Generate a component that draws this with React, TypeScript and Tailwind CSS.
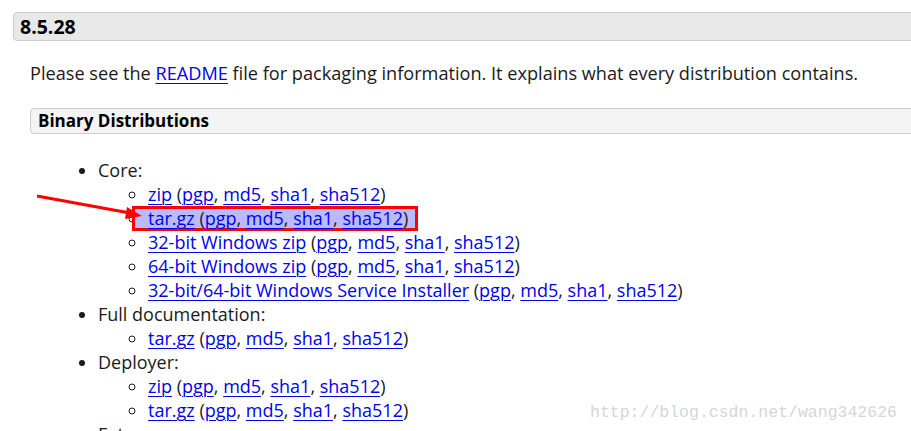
import React from 'react';

const sigs = ['pgp', 'md5', 'sha1', 'sha512'];

const Link: React.FC<{ children: React.ReactNode }> = ({ children }) => (
  <a href="#" className="text-[#0000ee] underline underline-offset-[3px] decoration-1">{children}</a>
);

const Dist: React.FC<{ name: string }> = ({ name }) => (
  <>
    <Link>{name}</Link> (
    {sigs.map((s, i) => (
      <React.Fragment key={s}>
        <Link>{s}</Link>
        {i < sigs.length - 1 ? ', ' : ''}
      </React.Fragment>
    ))}
    )
  </>
);

const Sub: React.FC<{ children: React.ReactNode }> = ({ children }) => (
  <li className="list-[circle] h-6 leading-6">{children}</li>
);

const App: React.FC = () => {
  return (
    <div
      className="relative w-[911px] h-[431px] overflow-hidden bg-white text-[#1a1a1a] text-[18px]"
      style={{ fontFamily: '"Open Sans", "Noto Sans", sans-serif' }}
    >
      <div className="pt-[12px] pl-[13px]">
        <h3 className="h-[29px] w-[920px] flex items-center pl-[6px] bg-[#e8e8e8] border border-[#cccccc] rounded-l-[4px] text-[19.5px] font-bold text-black">
          8.5.28
        </h3>
      </div>

      <div className="pl-[30px]">
        <p className="mt-[20px] h-6 leading-6 text-[18.15px]">
          Please see the <Link>README</Link> file for packaging information. It explains what every distribution contains.
        </p>

        <h4 className="mt-[23px] h-[26px] w-[900px] flex items-center pl-[7px] bg-[#f4f4f4] border border-[#cccccc] rounded-l-[4px] text-[17px] font-bold text-black">
          Binary Distributions
        </h4>

        <ul className="mt-[24px] pl-[68px] list-disc">
          <li className="h-6 leading-6">Core:</li>
          <li className="list-none">
            <ul className="pl-[50px]">
              <Sub><Dist name="zip" /></Sub>
              <Sub>
                <span className="inline-block ml-[-16px] pl-[13px] pr-[7px] h-[25px] leading-[19px] border-[3px] border-[#ff0000] bg-[#babaff]">
                  <Dist name="tar.gz" />
                </span>
              </Sub>
              <Sub><Dist name="32-bit Windows zip" /></Sub>
              <Sub><Dist name="64-bit Windows zip" /></Sub>
              <Sub><Dist name="32-bit/64-bit Windows Service Installer" /></Sub>
            </ul>
          </li>
          <li className="h-6 leading-6">Full documentation:</li>
          <li className="list-none">
            <ul className="pl-[50px]">
              <Sub><Dist name="tar.gz" /></Sub>
            </ul>
          </li>
          <li className="h-6 leading-6">Deployer:</li>
          <li className="list-none">
            <ul className="pl-[50px]">
              <Sub><Dist name="zip" /></Sub>
              <Sub><Dist name="tar.gz" /></Sub>
            </ul>
          </li>
          <li className="h-6 leading-6">Extras:</li>
        </ul>
      </div>

      <svg className="absolute left-0 top-0" width="911" height="431" viewBox="0 0 911 431">
        <line x1="37" y1="196" x2="130" y2="213" stroke="#ff0000" strokeWidth="3" />
        <polygon points="142,216 127,207 125,219" fill="#ff0000" />
      </svg>

      <div
        className="absolute left-[590px] top-[401px] text-[16.5px] text-[#d6d6d6]"
        style={{ fontFamily: '"Liberation Mono", "DejaVu Sans Mono", monospace' }}
      >
        http://blog.csdn.net/wang342626
      </div>
    </div>
  );
};

export default App;
